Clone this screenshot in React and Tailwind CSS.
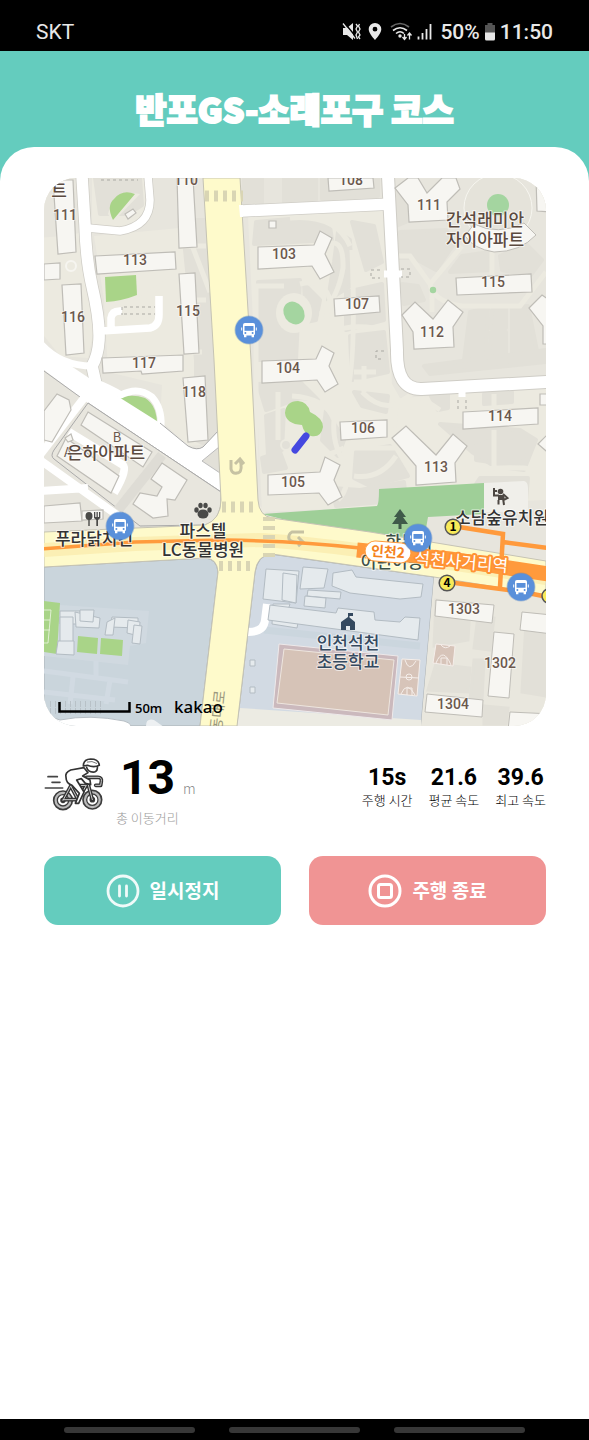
const BLOCK = '#e2e0d8';
const PATH = '#eceae0';

const blocksLight = [
  '92,178 148,178 150,206 140,222 120,228 92,224',
  '94,236 180,228 205,240 211,360 200,445 188,446 160,420 162,385 108,372 104,300',
  '44,240 84,232 90,290 94,330 88,358 60,356 44,336',
  '248,216 384,210 392,384 400,398 546,388 546,500 262,512',
];

const greys = [
  '95,178 140,178 142,205 128,214 100,214',
  '182,220 206,220 212,360 220,440 205,444 196,440 196,360',
  '244,178 262,178 262,203 243,204', '284,178 316,178 316,200 284,202', '322,178 378,178 378,196 322,199',
  '256,222 300,218 330,226 332,240 254,244', '258,282 300,280 296,360 258,360',
  '338,232 350,240 352,285 328,300 334,262', '352,222 374,226 382,262 366,270', '346,292 382,284 384,320 346,330',
  '350,336 384,332 388,372 352,380', '304,284 320,300 316,320 306,322', '258,384 300,382 318,400 300,398 266,410',
  '266,416 284,410 282,450 268,456', '326,410 344,440 338,456 322,440', '354,392 388,396 386,412 362,406',
  '356,452 390,446 408,476 370,486 354,478', '262,458 280,452 286,468 264,472', '332,488 360,490 404,482 406,500 336,506',
  '398,190 412,196 406,222 396,226', '400,232 446,230 454,244 436,270 414,258 398,258', '402,284 418,286 424,300 404,304',
  '462,256 490,252 492,270 450,272', '500,256 526,244 542,260 530,276 502,270', '470,312 488,308 486,360 464,360',
  '492,310 506,309 506,328 490,328', '491,332 506,332 506,356 489,358', '512,308 528,306 538,356 512,356',
  '424,366 546,350 546,362 430,374', '430,394 448,394 448,408 438,410', '484,394 512,392 512,402 484,404',
  '440,424 520,430 536,440 524,470 494,466 472,452', '476,446 490,440 490,462 476,460', '494,440 508,440 508,462 494,462', '514,440 526,444 528,460 514,464',
  '480,478 528,478 526,500 476,484', '436,600 470,606 468,640 434,646', '478,616 494,618 490,650 474,648', '436,664 470,668 468,692 428,690',
  '474,660 484,660 482,700 470,700', '526,622 546,622 546,696 522,692', '484,706 508,708 506,724 484,724',
];

const footpaths = [
  'M322 248Q344 232 343 268Q338 298 322 312Q318 330 334 350L346 372',
  'M290 218Q336 214 350 246M300 284Q324 278 330 300H374M330 300Q322 320 332 332Q350 324 374 328',
  'M292 396Q326 398 334 420Q332 444 344 462Q352 486 338 500M292 458Q316 462 344 448',
  'M352 250Q358 400 338 410M354 372H376M354 382H376M364 366V392M362 392Q380 410 396 404',
  'M396 256H410L430 284L462 246M430 284Q434 302 462 306H520L546 272M432 290V312M492 252V276',
  'M396 404Q414 394 420 386M422 398L440 410M396 404L394 428M350 448H398M354 476Q380 480 396 456',
  'M474 400V412H520M494 394V412M460 476Q478 466 524 468Q546 470 546 486M494 430V468',
  'M256 460V286H284M278 392V440',
  'M44 240L88 236M96 246H206M104 262L140 300L176 276M176 300L206 300M94 318H180M112 352H202M190 240L210 292',
];

const buildings = [
  '53,180 73,180 76,252 58,254', '95,256 175,252 176,269 97,274', '44,264 60,263 60,279 44,280',
  '62,285 81,284 84,353 66,355', '179,274 195,273 199,353 184,354', '177,178 193,178 197,247 179,248',
  '102,358 183,355 183,371 142,374 141,371 103,373', '183,378 205,376 208,440 188,442',
  '328,178 373,178 374,188 329,191',
  '258,247 314,245 320,231 332,238 325,254 334,272 320,279 312,266 258,269',
  '262,361 316,359 322,346 334,353 329,366 338,384 325,392 317,380 262,383',
  '268,475 320,472 325,457 340,465 334,480 342,497 328,505 319,493 268,495',
  '334,299 379,296 380,312 335,316', '340,422 387,420 387,437 341,440',
  '395,188 408,178 418,178 427,193 442,178 456,178 460,189 447,202 448,220 409,222 408,205',
  '402,315 415,302 433,319 448,300 463,312 453,327 454,347 414,349 413,332',
  '392,438 406,426 436,455 453,434 467,446 455,463 456,482 416,485 416,466',
  '456,278 531,274 532,292 457,295', '463,412 538,408 538,424 463,429',
  '529,308 542,295 552,302 552,344 543,344 543,326', '536,178 552,178 552,212 537,211',
  '540,394 552,394 552,405 540,405', '538,444 552,430 552,456',
  '436,600 494,605 492,623 435,616', '494,632 514,634 509,698 488,696',
  '427,694 483,700 482,717 425,712', '522,612 552,615 552,634 520,630', '510,712 552,714 552,730 508,730',
  '269,221 276,221 276,228 269,228',
  '44,411 57,394 69,400 71,410 52,442 44,440', '88,412 152,452 143,467 81,425', '66,438 119,476 111,493 57,456',
  '162,463 187,480 175,500 167,499 168,516 153,518 133,504 140,493 157,496 162,487 151,479',
  '44,506 80,503 82,521 44,523', '82,511 103,510 103,519 82,520', '125,214 133,209 136,213 128,219', '65,438 71,434 73,440 68,442',
];

const coolBuildings = [
  '266,569 299,571 296,603 263,599', '273,604 290,604 288,610 300,612 297,628 272,624',
  '303,567 328,569 324,588 300,589', '333,573 352,570 356,577 423,584 421,597 400,599 350,593 332,586',
  '308,590 341,592 340,599 307,596', '305,596 326,598 325,608 304,606', '283,573 297,575 296,603 282,600',
  '270,605 336,613 338,608 374,612 375,620 400,622 405,617 420,618 418,640 268,620',
  '60,611 80,611 80,624 60,624', '60,617 73,617 73,642 60,642', '58,641 74,641 74,655 56,654',
  '75,612 100,618 99,628 76,627', '80,610 94,610 93,622 80,621',
  '112,617 138,618 138,628 110,627', '107,622 115,618 113,635 105,635', '128,620 140,622 139,636 127,633',
  '134,625 142,626 140,644 132,643', '230,561 240,561 240,564 230,564', '250,660 255,660 255,666 250,666', '250,687 255,687 255,693 250,693',
];

const numbers = [
  ['111', 65, 220], ['110', 186, 185], ['113', 135, 265], ['116', 73, 322], ['115', 188, 316],
  ['117', 144, 368], ['118', 194, 397], ['108', 351, 185], ['103', 284, 259], ['107', 357, 309],
  ['104', 288, 373], ['106', 363, 433], ['105', 293, 487], ['111', 429, 210], ['115', 493, 287],
  ['112', 432, 337], ['114', 500, 421], ['113', 436, 472], ['1303', 464, 614], ['1302', 500, 668], ['1304', 453, 709],
];

const mainLane = 'M82 176L85 225Q86 260 92 286Q100 320 99 340Q98 356 92 366L96 384';

function BusStop({ x, y }) {
  return (
    <g transform={`translate(${x} ${y})`}>
      <circle r="14.5" fill="#4677bd" opacity=".35" />
      <circle r="13.7" fill="#5a90da" />
      <rect x="-6" y="-7" width="12" height="12.5" rx="2" fill="#fff" />
      <path d="M-4.5 -4H4.500V.8H-4.500Z" fill="#5a90da" />
      <circle cx="-3.6" cy="3" r="1" fill="#5a90da" />
      <circle cx="3.6" cy="3" r="1" fill="#5a90da" />
      <path d="M-5 5H-2.600V7.300H-5ZM2.600 5H5V7.300H2.600Z" fill="#fff" />
      <path d="M-7.300 -2.500V.5M7.300 -2.500V.5" stroke="#fff" strokeWidth="1" />
    </g>
  );
}

function Exit({ x, y, n }) {
  return (
    <g>
      <circle cx={x} cy={y} r="7.8" fill="#f8ea58" stroke="#555" strokeWidth="1.5" />
      <text x={x} y={y + 4} textAnchor="middle" className="fill-black text-[12px] font-bold">{n}</text>
    </g>
  );
}

function Place({ x, y, children, className = 'fill-[#5b4a3f]' }) {
  return (
    <text x={x} y={y} textAnchor="middle" stroke="#fff" strokeOpacity=".65" strokeWidth="2" strokeLinejoin="round" paintOrder="stroke"
      className={`text-[17px] font-medium ${className}`}>{children}</text>
  );
}

function CourseMap() {
  return (
    <svg viewBox="44 178 502 548" role="img" aria-label="주행 지도"
      className="block h-auto w-full rounded-[32px] font-['Noto_Sans_CJK_KR',sans-serif]">
      <rect x="44" y="178" width="502" height="548" fill={PATH} />
      <path d="M44 178H204L214 362L221 500L207 525L44 532ZM240 178H546V560L270 518L258 503L251 360Z" fill="#e7e5dd" />
      {blocksLight.map((p) => <polygon key={p} points={p} fill={PATH} />)}
      {greys.map((p) => <polygon key={p} points={p} fill={BLOCK} stroke={BLOCK} strokeWidth="4" strokeLinejoin="round" />)}
      <g fill="none" stroke={PATH} strokeWidth="5">
        {footpaths.map((d) => <path key={d} d={d} />)}
      </g>
      <circle cx="498" cy="208" r="34" fill="#e5e3da" stroke="#f6f5ef" />
      <ellipse cx="294" cy="313" rx="18" ry="20" fill={PATH} />
      <circle cx="71" cy="266" r="5" fill={PATH} stroke="#f6f5f0" strokeWidth="2" />
      <circle cx="286" cy="445" r="5" fill={BLOCK} stroke={PATH} strokeWidth="2" />
      <path d="M108 214A26 26 0 0 1 140 194L113 222Z" fill={PATH} />

      <path d="M113 220Q106 206 114 199Q122 189 135 194Z" fill="#a9d488" />
      <path d="M105 277L136 275L137 295Q122 301 106 302Z" fill="#a9d488" />
      <path d="M119 399Q130 393 145 398Q158 406 157 428Z" fill="#a9d488" />
      <ellipse cx="294" cy="313" rx="10" ry="12" transform="rotate(-35 294 313)" fill="#a4d5a0" />
      <circle cx="498" cy="205" r="11" fill="#a4d5a0" />
      <circle cx="433" cy="290" r="3.2" fill="#a4d5a0" />
      <path d="M285 413Q286 401 298 401Q308 402 310 412Q323 418 323 427Q321 438 311 436Q304 434 302 425Q286 424 285 413Z" fill="#a9d488" />
      <path d="M262 514L377 506Q379 504 379 489L484 483V514L428 517L424 540L290 521Z" fill="#9fcf98" />
      <path d="M484 483L524 481Q528 482 528 488V512H484Z" fill="#f0efea" />

      <g fill="none" strokeLinejoin="round">
        <g stroke="#cfcdc6">
          <path d={mainLane} strokeWidth="13" />
          <path d="M88 228L120 231Q150 226 150 200L148 176" strokeWidth="9" />
          <path d="M388 176L397 350Q396 390 422 389L548 382" strokeWidth="14" />
          <path d="M242 211L392 204" strokeWidth="13" />
        </g>
        <g stroke="#fff">
          <path d={mainLane} strokeWidth="11.5" />
          <path d="M88 228L120 231Q150 226 150 200L148 176M101 331L150 328Q159 326 159 315V296M111 330V318Q112 310 122 311" strokeWidth="7.5" />
          <path d="M40 343Q60 366 92 366" strokeWidth="7" />
          <path d="M388 176L397 350Q396 390 422 389L548 382" strokeWidth="12" />
          <path d="M242 211L392 204" strokeWidth="11.5" />
          <path d="M94 382Q110 388 121 395Q138 386 152 397Q162 408 161 426" strokeWidth="7" />
          <path d="M462 386V397M384 274H402" strokeWidth="7" />
        </g>
        <path d="M122 307V315M124 307H155M124 314H155M101 180H138M380 270H371V278H380M384 351H376V359H384M401 269H410V277H401M458 400V412M466 400V412" stroke="#aaa9a3" strokeWidth="1" strokeDasharray="3 3" />
      </g>
      <path d="M44 348L95 382L160 423L190 447Q197 451 203 447L219 430L222 492L88 403L44 370Z" fill="#fff" />
      <path d="M160 423L188 446Q197 451 203 447L219 430M44 371L80 397M88 403L221 492" fill="none" stroke="#aaa" />
      <path d="M202 461L219 447L220 473Z" fill={BLOCK} stroke="#bbb" />
      <path d="M88 403L221 492V505Q217 524 204 525L140 526L54 459Q50 456 54 450Z" fill="#e8e6de" stroke="#aaa" />
      <path d="M44 448L80 399" stroke="#aaa" />
      <path d="M84 398L40 455" stroke="#fff" strokeWidth="8" />
      <path d="M40 460L124 520M40 491L88 488" stroke="#fff" strokeWidth="8" />
      <path d="M69 432L123 465Q128 470 114 493" fill="none" stroke="#fff" strokeWidth="8" />
      <path d="M162 455L118 510" stroke="#dedcd5" strokeWidth="10" />
      {buildings.map((p) => <polygon key={p} points={p} fill="#f7f6f2" stroke="#bfbdb7" strokeWidth="1.2" />)}
      <path d="M465 236L474 224Q498 236 524 223L536 235Q520 252 494 252Q474 249 465 236Z" fill="#f7f6f2" stroke="#bfbdb7" />

      <path d="M44 567L205 558Q217 559 218 572L200 726H44Z" fill="#cad5dc" stroke="#aab1b5" />
      <path d="M60 605L149 611L146 643L130 646L128 665L44 656V610Z" fill="#d0d9e0" />
      <path d="M44 671L128 682M44 692L115 700M96 661V676M73 677L70 704M110 680L106 704" stroke="#d1dae2" strokeWidth="5" />
      <path d="M44 601L60 603L57 654L44 652Z" fill="#a9d488" />
      <path d="M44 610H51L48 643H44M44 620H50M44 630H50" fill="none" stroke="#edf6e4" strokeWidth=".8" />
      <path d="M78 636L98 638L97 654L77 652ZM101 638L123 640L122 656L100 654Z" fill="#a9d488" />
      <path d="M60 720Q90 714 124 721Q134 724 130 730H44V712Q50 718 60 720Z" fill="#fff" stroke="#b7bec4" />
      <path d="M146 726Q146 718 154 720L164 727Z" fill="#edf0f2" />
      <path d="M50 704H105M50 711H105" stroke="#b8c1c7" strokeWidth="6" strokeDasharray="1 4" />

      <path d="M237 726L255 572Q258 556 270 554L434 577L421 726Z" fill="#d2dae3" stroke="#aab1b5" />
      <path d="M434 577L546 594V726H421Z" fill="#e9e7de" />
      {greys.slice(-6).map((p) => <polygon key={p} points={p} fill={BLOCK} stroke={BLOCK} strokeWidth="3" />)}
      <path d="M240 708L421 720V726H237Z" fill="#ecebe3" />
      <path d="M264 630L420 646" stroke="#cbd6de" strokeWidth="7" />
      <path d="M248 632Q264 632 265 620L267 604" fill="none" stroke="#fff" strokeWidth="8" />
      <path d="M279 644L398 656L392 720L273 708Z" fill="#cbb9bd" stroke="#eee9ea" />
      <path d="M284 649L394 660L388 715L277 703Z" fill="#d6c3b7" stroke="#eee6df" />
      <g fill="#d7c4b9" stroke="#f5eeea" strokeWidth="1">
        <path d="M402 659L420 660L417 696L398 694Z" />
        <path d="M400 677L419 678M405 660Q409 673 416 661M401 694Q407 680 415 695M407 695V688H412V695" fill="none" />
        <circle cx="409" cy="677" r="3" fill="none" />
        <path d="M436 644L455 646L453 666L433 663Z" />
        <path d="M436 663Q443 646 451 665M441 664V658H447V665M441 645Q445 650 450 646" fill="none" />
      </g>
      {coolBuildings.map((p) => <polygon key={p} points={p} fill="#e5eaed" stroke="#b3bcc3" />)}
      {buildings.slice(23, 28).map((p) => <polygon key={p} points={p} fill="#f7f6f2" stroke="#bfbdb7" />)}

      <path d="M203 178H240L251 360L258 500Q259 516 272 518L370 532L546 561V595L434 577L272 554Q257 555 255 572L237 726H200L218 572Q217 558 205 558L44 567V532L205 525Q221 519 221 500L214 360Z" fill="#fefacb" stroke="#c5c3b4" />
      <path d="M239 205L243 205V217H240Z" fill="#fff" />
      <path d="M44 550L135 544L258 540Q320 542 546 578" fill="none" stroke="#fbefb4" strokeWidth="14" />
      <g stroke="#d9d5b4">
        <path d="M205 196H243M222 507H258" strokeWidth="11" strokeDasharray="4 5" />
        <path d="M219 566H254" strokeWidth="10" strokeDasharray="4 5" />
        <path d="M269 517V560" strokeWidth="12" strokeDasharray="4 5" />
      </g>
      <g fill="none" stroke="#c6c2a3" strokeWidth="3">
        <path d="M231 460V469Q232 474 237 473Q242 473 241 464L240 460M235 464L240 459L244 464" />
        <path d="M304 532H292Q288 534 289 539Q291 543 302 542M298 537L303 542L298 546" />
      </g>

      <g fill="none" stroke="#ff9a3c">
        <path d="M40 549L135 542L225 540Q300 541 360 548" strokeWidth="3.5" />
        <path d="M357 550L450 559L548 574" strokeWidth="15" />
        <path d="M459 527L503 534L500 587M503 542L548 548M455 583L523 592L548 597" strokeWidth="4.5" />
      </g>

      {numbers.map(([n, x, y]) => (
        <text key={`${n}-${x}`} x={x} y={y} textAnchor="middle" stroke="#fff" strokeOpacity=".5" strokeWidth="2" strokeLinejoin="round" paintOrder="stroke"
          className="fill-[#6b584d] font-[Roboto,sans-serif] text-[14px] font-medium">{n}</text>
      ))}
      <Place x={59} y={197}>트</Place>
      <Place x={485} y={226}>간석래미안</Place>
      <Place x={485} y={246}>자이아파트</Place>
      <text x="117" y="442" textAnchor="middle" className="fill-[#6b584d] text-[13px]">B</text>
      <text x="68" y="457" textAnchor="middle" className="fill-[#6b584d] text-[13px]">A</text>
      <Place x={106} y={459}>은하아파트</Place>
      <Place x={94} y={545} className="fill-[#333]">푸라닭치킨</Place>
      <Place x={203} y={537} className="fill-[#333]">파스텔</Place>
      <Place x={203} y={556} className="fill-[#333]">LC동물병원</Place>
      <Place x={409} y={548} className="fill-[#3d5148]">한누리</Place>
      <Place x={392} y={568} className="fill-[#3d5148]">어린이공</Place>
      <path d="M370 552L450 559L520 570" fill="none" stroke="#ff9a3c" strokeWidth="14" />
      <Place x={502} y={524} className="fill-[#333]">소담숲유치원</Place>
      <Place x={348} y={649} className="fill-[#34495f]">인천석천</Place>
      <Place x={348} y={668} className="fill-[#34495f]">초등학교</Place>
      <g transform="rotate(5 460 566)">
        <text x="461" y="568" textAnchor="middle" stroke="#ff9233" strokeWidth="4" strokeLinejoin="round" paintOrder="stroke" className="fill-white text-[17px] font-normal">석천사거리역</text>
      </g>
      <g transform="rotate(4 388 552)">
        <rect x="365" y="542" width="46" height="20" rx="10" fill="#fff" stroke="#ff9a3c" />
        <text x="388" y="557" textAnchor="middle" className="fill-[#f58220] text-[14px] font-bold">인천2</text>
      </g>
      <text transform="translate(221 732) rotate(-84)" className="fill-[#9b987e] text-[15px]">동대로</text>

      <g fill="#4a4a48">
        <ellipse cx="203" cy="514" rx="5.500" ry="4.500" />
        <ellipse cx="196.500" cy="510" rx="2.200" ry="2.800" />
        <ellipse cx="200.500" cy="505.500" rx="2.200" ry="2.800" />
        <ellipse cx="205.500" cy="505.500" rx="2.200" ry="2.800" />
        <ellipse cx="209.500" cy="510" rx="2.200" ry="2.800" />
        <ellipse cx="89" cy="516" rx="3.500" ry="4" />
        <path d="M88.300 518H89.700V526H88.300ZM94 512H95.300V517H96.500V512H97.800V517H99V512H100.300V518L98 520V526H96.300V520L94 518Z" />
      </g>
      <path d="M400 509L406 517H403L408 524H401.500V529H398.500V524H392L397 517H394Z" fill="#3f5a49" />
      <g fill="#4c4742" stroke="#4c4742">
        <circle cx="500.500" cy="491.500" r="2.800" stroke="none" />
        <path d="M494 488V495.500H499M494 491H497M503 494L507.500 498L503 500.500M503 498L504 505M498.500 500V504.500" fill="none" strokeWidth="2" />
        <path d="M498 495H504L505 500H498Z" stroke="none" />
      </g>
      <path d="M341 630V622L348 617V613H353V616H349.500V617.500L355 622V630H350V626H346V630Z" fill="#34495f" />

      <BusStop x={249} y={330} />
      <BusStop x={120} y={526} />
      <BusStop x={418} y={538} />
      <BusStop x={521} y={587} />
      <Exit x={453} y={527} n="1" />
      <Exit x={447} y={583} n="4" />
      <circle cx="549" cy="596" r="7" fill="#f8ea58" stroke="#555" strokeWidth="1.500" />
      <path d="M295 450L306 436" stroke="#4548e0" strokeWidth="7" strokeLinecap="round" />
      <path d="M59.500 702V711.500H129.500V702" fill="none" stroke="#000" strokeWidth="2.500" />
      <text x="135" y="713" className="fill-black font-['Open_Sans',sans-serif] text-[13px] font-semibold">50m</text>
      <text x="174" y="713" className="fill-black font-['Noto_Sans',sans-serif] text-[17px] font-medium">kakao</text>
    </svg>
  );
}

function Cyclist() {
  const frame = 'M67 165L90 122L137 120L112 163H67M90 122L112 163M155 163L140 108M138 96H172Q184 96 182 108L180 120H165';
  return (
    <svg viewBox="10 35 180 165" className="h-[55px] w-[60px]" fill="none" strokeLinecap="round" strokeLinejoin="round" aria-hidden="true">
      <path d="M22 94H50M34 111H58M14 128H66" stroke="#444" strokeWidth="5" />
      <g stroke="#3c3c3c" strokeWidth="9">
        <circle cx="67" cy="165" r="23" stroke="#bbb" />
        <circle cx="155" cy="163" r="23" stroke="#bbb" />
        <circle cx="67" cy="165" r="28" strokeWidth="5" />
        <circle cx="67" cy="165" r="17" strokeWidth="4" />
        <circle cx="67" cy="165" r="6" strokeWidth="5" />
        <circle cx="155" cy="163" r="28" strokeWidth="5" />
        <circle cx="155" cy="163" r="17" strokeWidth="4" />
        <circle cx="155" cy="163" r="6" strokeWidth="5" />
      </g>
      <path d={frame} stroke="#333" strokeWidth="11" />
      <path d={frame} stroke="#ccc" strokeWidth="3" />
      <path d="M76 96Q72 82 90 74L130 67L142 82L126 92L148 104L150 118L134 114L122 100L108 104L130 140L114 174H104L116 144L94 120Q76 114 76 96Z" fill="#fff" stroke="#333" strokeWidth="5" />
      <path d="M138 66Q142 82 162 80Q172 76 170 62" fill="#fff" stroke="#333" strokeWidth="5" />
      <path d="M128 62Q128 42 150 41Q174 41 176 60Q160 68 140 60Z" fill="#fff" stroke="#333" strokeWidth="5" />
      <path d="M140 50Q154 45 168 54" stroke="#777" strokeWidth="3" />
    </svg>
  );
}

function StatusIcons() {
  return (
    <svg viewBox="0 0 94 20" className="h-5 w-[94px]" aria-hidden="true">
      <g fill="#e8e8e8">
        <path d="M1 6H5L11 1V18L5 13H1Z" />
        <path d="M3 1.500L14.500 15.500" stroke="#000" strokeWidth="1.500" />
        <path d="M1 1.500L13 16.500M14 2L15.500 4L14 7L15.500 10L14 13L15.500 17M17.500 2L16.500 4L18 7L16.500 10L18 13L16.500 15L18 17" fill="none" stroke="#e8e8e8" strokeWidth="1.300" />
        <path fillRule="evenodd" d="M33 1A6.300 6.300 0 0 0 26.700 7.300C26.700 11.500 33 18 33 18S39.300 11.500 39.300 7.300A6.300 6.300 0 0 0 33 1ZM33 4.800A2.400 2.400 0 1 1 33 9.600A2.400 2.400 0 0 1 33 4.800Z" />
        <circle cx="58" cy="14" r="1.700" />
      </g>
      <g fill="none" strokeWidth="1.600">
        <path d="M49 5Q58 -2 67 5" stroke="#666" />
        <path d="M51 8.500Q58 3 65 8.500M54 11.500Q58 8 62 11.500" stroke="#e8e8e8" />
        <path d="M62.500 12V17M60.500 15L62.500 17.500L64.500 15M67.500 17.500V11M65.500 13.500L67.500 11L69.500 13.500" stroke="#e8e8e8" strokeWidth="1.300" />
        <path d="M76.500 17.500V14.500M80.500 17.500V11M84.500 17.500V7M88.500 17.500V2" stroke="#e8e8e8" strokeWidth="1.800" />
      </g>
    </svg>
  );
}

function Stat({ value, label }) {
  return (
    <div className="flex flex-col items-center">
      <dd className="order-1 font-[Roboto,sans-serif] text-[23px] leading-6 font-bold">{value}</dd>
      <dt className="order-2 text-[13px] leading-5 font-light">{label}</dt>
    </div>
  );
}

export default function App() {
  return (
    <div className="flex min-h-screen flex-col bg-white font-['Noto_Sans_CJK_KR',sans-serif] text-black">
      <div className="flex h-[51px] items-end justify-between bg-black px-9 pb-[7px] font-[Roboto,sans-serif] text-[21px] leading-6 text-[#e8e8e8]">
        <span>SKT</span>
        <div className="flex items-center">
          <StatusIcons />
          <span className="ml-1 font-medium">50%</span>
          <svg viewBox="0 0 12 18" className="mx-1 h-[18px] w-3" aria-hidden="true">
            <path d="M3.500 0H8.500V2H11V10H1V2H3.500Z" fill="#555" />
            <path d="M1 9.500H11V16Q11 17.500 9.500 17.500H2.500Q1 17.500 1 16Z" fill="#e8e8e8" />
          </svg>
          <span className="font-medium">11:50</span>
        </div>
      </div>
      <div className="flex flex-1 flex-col bg-[#64ccbe]">
        <header className="flex h-24 items-center justify-center pt-5">
          <h1 className="text-[34px] leading-10 font-black text-white [-webkit-text-stroke:2px_white]">반포GS-소래포구 코스</h1>
        </header>
        <main className="flex-1 rounded-t-[34px] bg-white px-[43px] pt-[31px] pl-11">
          <CourseMap />
          <section className="mt-7 flex items-start justify-between">
            <div className="flex items-start">
              <div className="pt-[3px]"><Cyclist /></div>
              <div className="ml-3 flex flex-col">
                <p className="flex items-baseline gap-2 pl-1 font-[Roboto,sans-serif] text-5xl leading-[48px] font-bold">
                  13<span className="font-['Noto_Sans_CJK_KR',sans-serif] text-sm leading-6 font-light text-[#888]">m</span>
                </p>
                <p className="mt-1 text-[13px] leading-6 font-light text-[#999]">총 이동거리</p>
              </div>
            </div>
            <dl className="mt-3 flex gap-4">
              <Stat value="15s" label="주행 시간" />
              <Stat value="21.6" label="평균 속도" />
              <Stat value="39.6" label="최고 속도" />
            </dl>
          </section>
          <div className="mt-[26px] grid grid-cols-2 gap-7">
            <button type="button" className="flex h-[69px] items-center justify-center gap-2.5 rounded-[14px] bg-[#64ccbe] text-[19px] font-bold text-white">
              <svg viewBox="0 0 34 34" className="size-[34px]" fill="none" stroke="currentColor" strokeOpacity=".9" strokeWidth="2.800" strokeLinecap="round" aria-hidden="true">
                <circle cx="17" cy="17" r="15" />
                <path d="M13.500 12V22M20.500 12V22" />
              </svg>
              일시정지
            </button>
            <button type="button" className="flex h-[69px] items-center justify-center gap-2.5 rounded-[14px] bg-[#f09494] text-[19px] font-bold text-white">
              <svg viewBox="0 0 34 34" className="size-[34px]" fill="none" stroke="currentColor" strokeWidth="3" aria-hidden="true">
                <circle cx="17" cy="17" r="15" />
                <rect x="10.500" y="10.500" width="13" height="13" rx="2" />
              </svg>
              주행 종료
            </button>
          </div>
        </main>
      </div>
      <div className="flex h-[21px] items-center justify-between gap-[34px] bg-black px-16">
        <span className="h-1.5 flex-1 rounded-full bg-[#373737]" />
        <span className="h-1.5 flex-1 rounded-full bg-[#373737]" />
        <span className="h-1.5 flex-1 rounded-full bg-[#373737]" />
      </div>
    </div>
  );
}
